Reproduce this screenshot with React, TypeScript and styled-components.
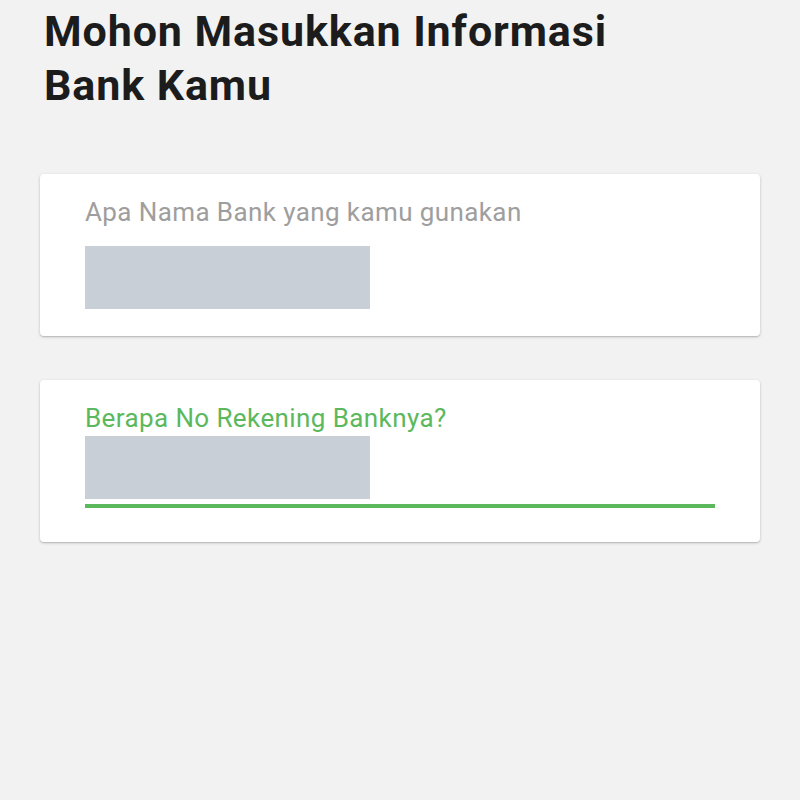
import React from "react";
import styled, { createGlobalStyle } from "styled-components";

const Global = createGlobalStyle`
  html, body { margin: 0; padding: 0; background: #f2f2f2; }
  body { font-family: Roboto, "Noto Sans", sans-serif; }
`;

const Page = styled.div`
  width: 800px;
  height: 800px;
  background: #f2f2f2;
  padding: 0 40px;
  box-sizing: border-box;
  display: flex;
  flex-direction: column;
`;

const Title = styled.h1`
  margin: 4px 0 0 4px;
  font-family: Roboto, sans-serif;
  font-weight: 700;
  font-size: 43px;
  line-height: 54px;
  color: #1c1c1c;
  letter-spacing: 0.9px;
`;

const Cards = styled.div`
  margin-top: 62px;
  display: flex;
  flex-direction: column;
  gap: 44px;
`;

const Card = styled.div`
  background: #ffffff;
  border-radius: 4px;
  box-shadow: 0 1px 3px rgba(0, 0, 0, 0.22), 0 1px 1px rgba(0, 0, 0, 0.08);
  height: 162px;
  box-sizing: border-box;
  padding: 0 45px;
  display: flex;
  flex-direction: column;
`;

const Label = styled.div<{ $active?: boolean }>`
  font-family: Roboto, sans-serif;
  font-size: 26px;
  line-height: 30px;
  letter-spacing: 0.4px;
  color: ${(p) => (p.$active ? "#5cb85c" : "#9e9e9e")};
  margin-top: 23px;
`;

const Field = styled.div<{ $active?: boolean }>`
  margin-top: ${(p) => (p.$active ? "3px" : "19px")};
  border-bottom: ${(p) => (p.$active ? "4px solid #5cb85c" : "none")};
  padding-bottom: ${(p) => (p.$active ? "5px" : "0")};
`;

const Redacted = styled.div`
  width: 285px;
  height: 63px;
  background: #c8cfd7;
`;

export default function App() {
  return (
    <>
      <Global />
      <Page>
        <Title>
          Mohon Masukkan Informasi
          <br />
          Bank Kamu
        </Title>
        <Cards>
          <Card>
            <Label>Apa Nama Bank yang kamu gunakan</Label>
            <Field>
              <Redacted />
            </Field>
          </Card>
          <Card>
            <Label $active>Berapa No Rekening Banknya?</Label>
            <Field $active>
              <Redacted />
            </Field>
          </Card>
        </Cards>
      </Page>
    </>
  );
}
